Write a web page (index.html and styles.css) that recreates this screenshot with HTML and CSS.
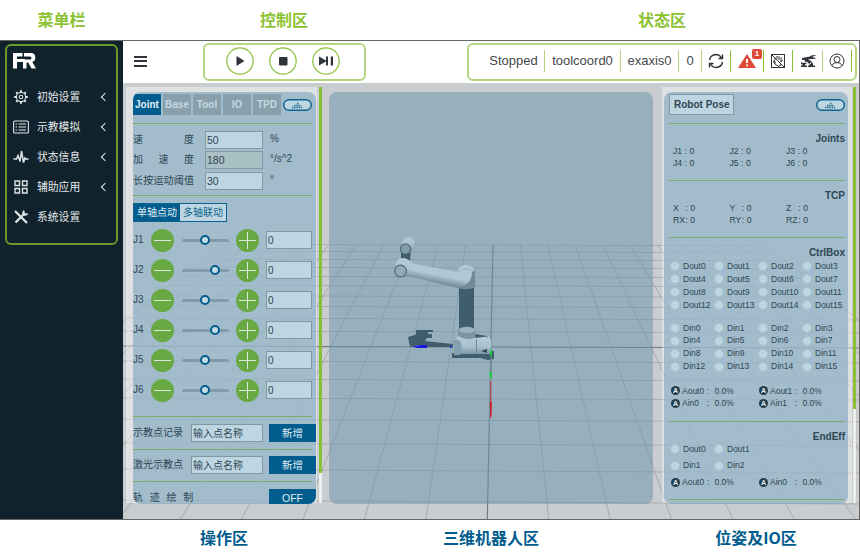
FILE: index.html
```html
<!DOCTYPE html>
<html lang="zh-CN">
<head>
<meta charset="utf-8">
<title>FR</title>
<link rel="stylesheet" href="styles.css">
</head>
<body>
<div class="captions top"><span>菜单栏</span><span>控制区</span><span>状态区</span></div>
<div class="app">
  <nav class="sidebar">
    <div class="menu">
      <svg class="logo" viewBox="0 0 24 18"><path d="M0 1H9.500V4.500H4V7H12V10H4V16.500H0ZM11 1H18Q22.300 1 22.300 5.500Q22.300 9 19.300 10L23 16.500H18.500L15.200 10.500H13.500V16.500H10V7.500H17Q18.500 7.500 18.500 6T17 4.500H11Z" fill="#fff"/></svg>
      <div class="item"><svg viewBox="0 0 16 16"><circle cx="8" cy="8" r="4.600"/><circle cx="8" cy="8" r="1.800"/><path stroke-width="2" d="M8 1.200V3.200M8 12.800V14.800M1.200 8H3.200M12.800 8H14.800M3.200 3.200L4.600 4.600M11.400 11.400L12.800 12.800M12.800 3.200L11.400 4.600M4.600 11.400L3.200 12.800"/></svg><span>初始设置</span><i></i></div>
      <div class="item"><svg viewBox="0 0 16 16"><rect x=".6" y="2" width="14.800" height="12" rx="1"/><path d="M5.500 5H13M5.500 8H13M5.500 11H13M2.500 5H4M2.500 8H4M2.500 11H4"/></svg><span>示教模拟</span><i></i></div>
      <div class="item"><svg viewBox="0 0 16 16"><path stroke-width="1.500" d="M.5 10H3.500L5 6.500L7 12.500L8.500 2L10.500 13.500L12 9L13 10H15.500"/></svg><span>状态信息</span><i></i></div>
      <div class="item"><svg viewBox="0 0 16 16"><path stroke-width="1.400" d="M2 2H6.500V6.500H2ZM9.500 2H14V6.500H9.500ZM2 9.500H6.500V14H2ZM9.500 9.500H14V14H9.500Z"/></svg><span>辅助应用</span><i></i></div>
      <div class="item"><svg viewBox="0 0 16 16"><path stroke-width="2.300" d="M2 2L9 9M5 5L14 14M12 4L2.500 13.500"/><path stroke-width="2" d="M11 1.800Q9.500 4.500 11 5.500Q13 6.500 14.500 4.500"/></svg><span>系统设置</span></div>
    </div>
  </nav>
  <main class="main">
    <header class="header">
      <div class="burger"></div>
      <div class="controls">
        <svg viewBox="0 0 28 28"><circle cx="14" cy="14" r="13.200"/><path d="M10.500 9L18.500 14L10.500 19Z"/></svg>
        <svg viewBox="0 0 28 28"><circle cx="14" cy="14" r="13.200"/><rect x="10" y="10" width="8.500" height="8.500" rx="1"/></svg>
        <svg viewBox="0 0 28 28"><circle cx="14" cy="14" r="13.200"/><path d="M7 9.500L14 13.500V9.500H16V18.500H14V14.500L7 18.500ZM18.800 9.500H21V18.500H18.800Z"/></svg>
      </div>
      <div class="status">
        <span class="first">Stopped</span><span>toolcoord0</span><span>exaxis0</span><span>0</span>
        <span class="dark"><svg viewBox="0 0 16 16"><path stroke-width="1.400" d="M1.500 7Q2.500 1.700 8 1.500Q11.500 1.500 13.500 5M14.500 1.500V5.500H10.500M14.500 9Q13.500 14.300 8 14.500Q4.500 14.500 2.500 11M1.500 14.500V10.500H5.500"/></svg></span>
        <span class="dark alert"><svg viewBox="0 0 16 16" preserveAspectRatio="none"><path d="M8 2L15.200 14.500H.8Z" fill="#df4a38" stroke="#df4a38" stroke-linejoin="round"/><path d="M8 6V10M8 11.500V13.300" stroke="#fff" stroke-width="1.700"/></svg><b>1</b></span>
        <span class="dark"><svg viewBox="0 0 16 16"><rect x="1.500" y="1.500" width="13" height="13"/><path d="M1.500 1.500L14.500 14.500M5 7V4.500M7 6V3M9 7V3.200M11 9V4.500M5 7L4 9Q5 12.500 8 13H10L11 11M3 8L6 10M12.500 7L11 9"/></svg></span>
        <span><svg viewBox="0 0 16 16"><g fill="#30343a" stroke="none"><path d="M2 5L10 3.500L11 2.500L15.500 2V3L12.500 3.500L13 4.500L15.500 4.800V5.800L11.500 6L8 6.500L11 8L13 10.500V12.500H15V14H8V12.500H9.500V11L7 9L5 8.500L4.500 7H2Z"/><path d="M1 9L3 10L5 9.500L7 10.500L5 11.500V12.500H7V14H1V12.500H2.500V11.500L1 11Z"/></g><circle cx="10.500" cy="10.300" r=".8" fill="#fff" stroke="none"/></svg></span>
        <span class="dark"><svg viewBox="0 0 16 16"><circle cx="8" cy="8" r="7"/><circle cx="8" cy="6.500" r="3"/><path d="M3 12.500Q4 9.500 8 9.500T13 12.500"/></svg></span>
      </div>
    </header>
    <div class="workspace">
      <svg class="floor" viewBox="123 83 736 436" preserveAspectRatio="none">
        <defs><clipPath id="plane"><path d="M219 244L768 245L1103 519.500H-128Z"/></clipPath></defs>
        <g clip-path="url(#plane)">
          <path class="line" d="M123 244L859 246M123 251L859 253M123 259L859 261M123 267L859 269M123 276L859 278M123 285L859 287M123 295.500L859 297.500M123 306L859 308M123 318L859 320M123 331L859 333M123 361L859 363M123 379L859 381M123 398L859 400M123 419L859 422M123 443L859 446M123 469L859 473M123 500L859 504"/>
          <path class="line" d="M219 245L-126.700 519M246.400 245L-65.300 519M273.800 245L-3.900 519M301.200 245L57.500 519M328.600 245L118.900 519M356 245L180.300 519M383.400 245L241.700 519M410.800 245L303.100 519M438.200 245L364.500 519M465.600 245L425.900 519M520.400 245L548.700 519M547.800 245L610.100 519M575.200 245L671.500 519M602.600 245L732.900 519M630 245L794.300 519M657.400 245L855.700 519M684.800 245L917.100 519M712.200 245L978.500 519M739.600 245L1039.900 519M767 245L1101.300 519"/>
          <path class="axis" d="M123 346L859 348M493 245L487.300 519"/>
        </g>
      </svg>

      <section class="column">
        <div class="panel operate">
          <div class="tabs"><b class="on">Joint</b><b>Base</b><b>Tool</b><b>IO</b><b>TPD</b><svg class="pill" viewBox="0 0 29 12"><rect x=".7" y=".7" width="27.600" height="10.600" rx="5.300"/><path d="M9 8.500H20M11 6.500H18M14 4.500H15.500"/></svg></div>
          <div class="block speeds">
            <div class="param"><label>速 度</label><span class="field">50</span><em>%</em></div>
            <div class="param"><label>加 速 度</label><span class="field off">180</span><em>°/s^2</em></div>
            <div class="param"><label>长按运动阈值</label><span class="field">30</span><em>°</em></div>
          </div>
          <div class="block joints">
            <div class="mode"><span class="on">单轴点动</span><span>多轴联动</span></div>
            <div class="joint"><label>J1</label><u></u><div class="track"><s></s></div><u class="plus"></u><span class="field">0</span></div>
            <div class="joint"><label>J2</label><u></u><div class="track high"><s></s></div><u class="plus"></u><span class="field">0</span></div>
            <div class="joint"><label>J3</label><u></u><div class="track"><s></s></div><u class="plus"></u><span class="field">0</span></div>
            <div class="joint"><label>J4</label><u></u><div class="track high"><s></s></div><u class="plus"></u><span class="field">0</span></div>
            <div class="joint"><label>J5</label><u></u><div class="track"><s></s></div><u class="plus"></u><span class="field">0</span></div>
            <div class="joint"><label>J6</label><u></u><div class="track"><s></s></div><u class="plus"></u><span class="field">0</span></div>
          </div>
          <div class="block point"><label>示教点记录</label><span class="field">输入点名称</span><button>新增</button></div>
          <div class="block point"><label>激光示教点</label><span class="field">输入点名称</span><button>新增</button></div>
          <div class="block point"><label class="wide">轨 迹 绘 制</label><button>OFF</button></div>
        </div>
        <div class="scroll"><div class="thumb long"></div></div>
      </section>

      <section class="viewer">
        <svg viewBox="329 92 324 412">
          <defs>
            <linearGradient id="arm" x1="0" y1="0" x2="0" y2="1"><stop offset="0" stop-color="#b5cbd5"/><stop offset=".5" stop-color="#a7c0cc"/><stop offset="1" stop-color="#6b8796"/></linearGradient>
            <linearGradient id="link" gradientUnits="userSpaceOnUse" x1="434" y1="264" x2="430" y2="284"><stop offset="0" stop-color="#b3cad4"/><stop offset=".5" stop-color="#afc7d2"/><stop offset="1" stop-color="#5f7b89"/></linearGradient>
            <linearGradient id="base" x1="0" y1="0" x2="0" y2="1"><stop offset="0" stop-color="#b9ced7"/><stop offset=".6" stop-color="#a8c1cc"/><stop offset="1" stop-color="#7c98a6"/></linearGradient>
          </defs>
          <g fill="#3f5d6c">
            <path d="M408 337L416 334.500V330H433V332H428V334H432V338H427L425 341L453 344V347H427L420 345L410 347Z"/>
            <path d="M452 353H491V351H494V359L488 360L480 358H452ZM475 334L487 336V347H475Z"/>
            <path d="M459 284H474V331H459Z"/>
            <path d="M401 251L411 248L410 263L401 261Z"/>
          </g>
          <path d="M402 243Q403 237 409 237Q415 239 414.500 244L411 253H401Z" fill="url(#arm)"/>
          <circle cx="405.500" cy="249" r="5.700" fill="#516d7b"/><circle cx="405.500" cy="249" r="4.500" fill="#829ca9"/>
          <path d="M396 268Q395 258 402 258Q409 258 412 263.500L458 272Q458 265 466 265Q475 266 475.500 274V287Q467 291 456 287.500L408 276L399 277Z" fill="url(#link)"/>
          <path d="M475 270L475.500 287Q466 290 458 287.500Q472 285 472 272Z" fill="#6f8b99"/>
          <path d="M459 271Q466 266 474 272" fill="none" stroke="#8ea8b4" stroke-width=".8"/>
          <circle cx="400.500" cy="271" r="6.500" fill="#516d7b"/><circle cx="400.500" cy="271" r="5.300" fill="#91aab6"/>
          <path d="M458 329Q467 324 475.500 329V340H458Z" fill="#7b97a5"/><ellipse cx="467" cy="330" rx="8" ry="3" fill="#9ab3bf"/>
          <path d="M458 336Q466 341 475 338L491 336V354H458Q452 351 453 343Z" fill="url(#base)"/>
          <path d="M453 341Q458 337 461 343Q463 350 460 355H454Z" fill="#849faf"/>
          <path d="M476.500 339V354M487 336V338M490.500 336V339" stroke="#6f8a97" fill="none"/>
          <path d="M481 351L487 349V353Z" fill="#304853"/>
          <path d="M412 346.800L421 345H427V348H418ZM450 346L453 347L450 348Z" fill="#1717df"/>
          <path d="M491.300 349V379" stroke="#6e8e8e"/><path d="M490.300 351L491.800 349V356H490.300ZM489.300 372H491.500V379H490.500Z" fill="#00dc25"/>
          <path d="M490.800 381V416" stroke="#b82b3d"/><path d="M489.800 402H491.800L491.300 418H490.300Z" fill="#d31523"/>
        </svg>
      </section>

      <section class="column right">
        <div class="panel pose">
          <div class="posehead"><b>Robot Pose</b><svg class="pill" viewBox="0 0 29 12"><rect x=".7" y=".7" width="27.600" height="10.600" rx="5.300"/><path d="M9 8.500H20M11 6.500H18M14 4.500H15.500"/></svg></div>
          <div class="block group"><h3>Joints</h3><div class="values"><span>J1 : 0</span><span>J2 : 0</span><span>J3 : 0</span><span>J4 : 0</span><span>J5 : 0</span><span>J6 : 0</span></div></div>
          <div class="block group"><h3>TCP</h3><div class="values tcp"><span>X<q>: 0</q></span><span>Y<q>: 0</q></span><span>Z<q>: 0</q></span><span>RX<q>: 0</q></span><span>RY<q>: 0</q></span><span>RZ<q>: 0</q></span></div></div>
          <div class="block ctrl"><h3>CtrlBox</h3>
            <div class="io"><span>Dout0</span><span>Dout1</span><span>Dout2</span><span>Dout3</span><span>Dout4</span><span>Dout5</span><span>Dout6</span><span>Dout7</span><span>Dout8</span><span>Dout9</span><span>Dout10</span><span>Dout11</span><span>Dout12</span><span>Dout13</span><span>Dout14</span><span>Dout15</span></div>
            <div class="io din"><span>Din0</span><span>Din1</span><span>Din2</span><span>Din3</span><span>Din4</span><span>Din5</span><span>Din6</span><span>Din7</span><span>Din8</span><span>Din9</span><span>Din10</span><span>Din11</span><span>Din12</span><span>Din13</span><span>Din14</span><span>Din15</span></div>
            <div class="analog"><div><i>A</i><span>Aout0</span>:<span>0.0%</span></div><div><i>A</i><span>Aout1</span>:<span>0.0%</span></div><div><i>A</i><span>Ain0</span>:<span>0.0%</span></div><div><i>A</i><span>Ain1</span>:<span>0.0%</span></div></div>
          </div>
          <div class="block end"><h3>EndEff</h3>
            <div class="io loose"><span>Dout0</span><span>Dout1</span></div>
            <div class="io loose"><span>Din1</span><span>Din2</span></div>
            <div class="analog loose"><div><i>A</i><span>Aout0</span>:<span>0.0%</span></div><div><i>A</i><span>Ain0</span>:<span>0.0%</span></div></div>
          </div>
          <div class="block last"></div>
        </div>
        <div class="scroll"><div class="thumb short"></div></div>
      </section>
    </div>
  </main>
</div>
<div class="captions bottom"><span>操作区</span><span>三维机器人区</span><span>位姿及IO区</span></div>
</body>
</html>
```
FILE: styles.css
```css
* { box-sizing: border-box; }
body { margin: 0; width: 860px; height: 560px; overflow: hidden; background: #fff; color: #2d4654; font: 10px/12px "Liberation Sans", "Noto Sans CJK SC", sans-serif; }
svg { display: block; fill: none; flex: none; }
label, span, b, em, button { white-space: nowrap; }
.captions { display: grid; height: 40px; font: bold 16px/38px "Noto Sans CJK SC", sans-serif; text-align: center; }
.captions.top { grid-template-columns: 123px 322px 434px; color: #8cc232; }
.captions.bottom { grid-template-columns: 448px 86px 444px; line-height: 35px; color: #005c8e; justify-items: center; }
.app { display: flex; height: 480px; border: 1px solid #666; border-left: 0; overflow: hidden; }
.sidebar { width: 123px; background: #10222b; padding: 3px 5px; flex: none; }
.menu { height: 201px; width: 113px; border: 2px solid #6b9929; border-radius: 6px; padding: 6px 6px 0; color: #e4e9eb; }
.logo { width: 24px; height: 18px; margin-bottom: 12px; }
.item { display: flex; align-items: center; height: 30px; font-size: 10.8px; }
.item svg { width: 16px; height: 16px; stroke: #dfe5e7; stroke-width: 1.1; margin-right: 8px; }
.item span { width: 65px; }
.item i { width: 6px; height: 6px; border: solid #dfe5e7; border-width: 0 0 1.5px 1.5px; transform: rotate(45deg); }
.main { flex: 1; display: flex; flex-direction: column; min-width: 0; }
.header { height: 42px; flex: none; display: flex; align-items: center; padding: 0 2px 1px 11px; background: #fff; }
.burger { width: 13px; height: 11px; border: solid #303438; border-width: 2px 0; background: linear-gradient(#303438, #303438) center/13px 2px no-repeat; margin: 0 56px 1px 0; }
.controls, .status { height: 38px; border: 2px solid #b5d783; border-radius: 6px; }
.controls { width: 163px; display: flex; align-items: center; gap: 15px; padding-left: 21px; margin-right: 101px; }
.controls svg { width: 28px; height: 28px; fill: #30343a; margin-top: -2px; }
.controls circle { fill: #fff; stroke: #8abf36; stroke-width: 1.2; }
.status { width: 390px; display: grid; grid-template-columns: 76px 76px 58px 23px 29px 33px 29px 30px 29px; align-items: center; font-size: 13px; color: #45494c; }
.status > span { height: 22px; display: flex; align-items: center; justify-content: center; border-right: 1px solid #b5d783; margin-top: -2px; }
.status > .first { padding-left: 14px; }
.status > .dark { border-color: #8abf36; }
.status svg { width: 16px; height: 16px; stroke: #30343a; }
.status > .alert { justify-content: flex-start; padding-left: 7px; }
.alert b { width: 10px; height: 10px; margin: -14px 0 0 -4px; border-radius: 2px; background: #df4a38; color: #fff; font-size: 8px; line-height: 10px; text-align: center; z-index: 1; }
.status .alert svg { width: 18px; height: 16px; flex: none; }
.workspace { flex: 1; position: relative; display: flex; padding: 4px 0 15px 3px; background: #c9cdd0; }
.floor { position: absolute; inset: 0; width: 100%; height: 100%; }
.floor .line { stroke: #a6a7a7; stroke-width: .9; }
.floor .axis { stroke: #747d82; stroke-width: 1.2; }
.column, .viewer { position: relative; }
.column { width: 196px; display: flex; justify-content: space-between; background: linear-gradient(90deg, rgba(255,255,255,.4) 191px, transparent 191px); height: 416px; padding-left: 7px; }
.panel { width: 183px; margin-top: 5px; height: 412px; border-radius: 8px; background: rgba(131,168,191,.65); padding-top: 2px; overflow: hidden; }
.scroll { width: 3px; background: #eceeee; }
.thumb { background: #8abf36; width: 3px; }
.long { height: 386px; }
.short { height: 322px; }
.viewer { width: 324px; height: 412px; margin: 5px 9px 0 7px; border-radius: 8px; background: rgba(103,147,172,.5); overflow: hidden; }
.tabs { display: flex; align-items: center; height: 29px; padding-bottom: 8px; gap: 2px; }
.tabs b { width: 28px; height: 21px; line-height: 21px; text-align: center; background: #88a0ac; color: #c6d8e0; overflow: hidden; }
.tabs b.on, .mode .on { background: #005d8e; color: #e2edf2; }
.pill { width: 29px; height: 12px; }
.pill rect { fill: #bed6e1; stroke: #0b648f; stroke-width: 1.4; }
.pill path { stroke: #1b6488; stroke-width: 1.5; stroke-dasharray: 1.4 .8; }
.block { border-top: 1px solid #78ad6c; width: 179px; }
.field { display: block; height: 18px; border: 1px solid #8099a5; background: #bed6e1; padding: 0 1px; line-height: 17px; }
.speeds { height: 72px; padding-top: 6px; }
.param { display: flex; align-items: center; height: 20.3px; }
.param label { width: 61px; margin-right: 11px; text-align: justify; text-align-last: justify; white-space: normal; }
.param .field { width: 58px; margin-right: 7px; font-size: 10.5px; }
.param .off { background: #a9c0c4; }
.param em { font-style: normal; padding-bottom: 2px; }
.joints { height: 221px; padding-top: 7px; }
.mode { display: flex; width: 94px; height: 19px; border: 1px solid #0b648f; background: #bed6e1; color: #0b648f; line-height: 17px; text-align: center; margin-bottom: 3px; }
.mode span { width: 46px; }
.joint { display: flex; align-items: center; height: 30px; }
.joint label { width: 18px; }
.joint u { width: 23px; height: 23px; border-radius: 50%; background: linear-gradient(#dcebd9, #dcebd9) center/17px 1px no-repeat #69a944; }
.joint u.plus { background: linear-gradient(#dcebd9, #dcebd9) center/17px 1px no-repeat, linear-gradient(#dcebd9, #dcebd9) center/1px 17px no-repeat #69a944; }
.track { display: flex; align-items: center; width: 47px; height: 3px; border-radius: 2px; background: #829baa; margin: 0 7px 0 8px; padding-left: 18px; }
.track.high { padding-left: 28px; }
.track s { width: 10px; height: 10px; border: 2.5px solid #005d8e; background: #c5dce5; border-radius: 50%; flex: none; }
.joint .field { width: 46px; margin-left: 7px; }
.point { display: flex; align-items: center; height: 32.5px; }
.point label { width: 58px; flex: none; }
.point .field { width: 72px; margin-right: 6px; flex: none; }
.point button { width: 47px; flex: none; height: 18px; padding: 0; border: 0; background: #005d8e; color: #e2edf2; font: inherit; font-size: 10.5px; }
.point .wide { width: 136px; letter-spacing: 2px; }
.right { width: 194px; padding-left: 2px; background: linear-gradient(90deg, rgba(255,255,255,.4) 190px, transparent 190px); }
.pose { width: 184px; padding-left: 5px; }
.pose .block { width: 176px; }
.posehead { display: flex; align-items: center; justify-content: space-between; width: 176px; height: 29px; padding-bottom: 8px; }
.posehead b { width: 65px; height: 21px; border: 1px solid #8099a5; background: #bed6e1; line-height: 20px; padding-left: 4px; }
h3 { font-size: 10px; line-height: 14px; margin: 8px 0 0; text-align: right; }
.group { height: 57px; }
.values { display: grid; grid-template-columns: 56.5px 56.5px 56px; padding-left: 4px; font-size: 8.7px; line-height: 12px; margin-top: -1px; }
.tcp span { display: flex; justify-content: space-between; width: 22px; }
q { quotes: none; }
.io { display: grid; grid-template-columns: repeat(4, 44px); grid-auto-rows: 12.9px; font-size: 8.5px; line-height: 13px; padding-left: 2px; }
.io span { display: flex; align-items: center; }
.io span::before { content: ""; width: 8px; height: 8px; border-radius: 50%; background: #bed6e1; border: 1px solid #a9c2cd; margin-right: 3px; margin-left: -1px; flex: none; }
.ctrl { height: 184px; }
.din { margin-top: 10px; }
.analog { display: grid; grid-template-columns: 88px 88px; grid-auto-rows: 12.9px; margin-top: 11px; padding-left: 2px; font-size: 8.5px; }
.analog div { display: flex; align-items: center; }
.analog i { width: 9px; height: 9px; border-radius: 50%; background: #213e4c; color: #e2edf2; font: bold 7px/9px "Liberation Sans", sans-serif; text-align: center; margin-right: 2px; }
.analog span:nth-child(2) { width: 25px; }
.analog span:last-child { margin-left: 5px; }
.end { height: 78px; }
.loose { grid-auto-rows: 16.5px; margin-top: 0; }
.end .io:nth-child(2) { margin-top: -3px; }
```
